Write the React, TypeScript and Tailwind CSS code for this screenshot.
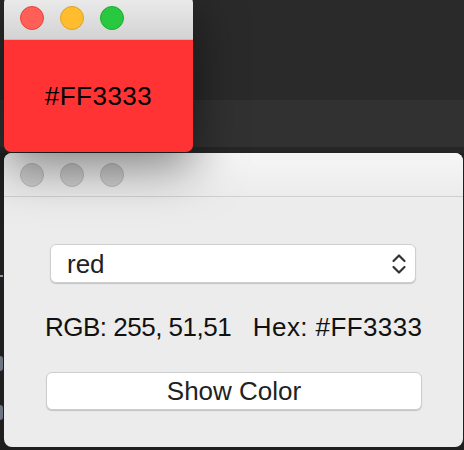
import React, { useState } from "react";

const FONT = { fontFamily: '"Liberation Sans", Arial, sans-serif' };

type Rgb = [number, number, number];

const COLORS: Record<string, Rgb> = {
  red: [255, 51, 51],
};

const toHex = (c: Rgb) =>
  "#" + c.map((n) => n.toString(16).padStart(2, "0").toUpperCase()).join("");

function Lights({ active }: { active: boolean }) {
  const cls = active
    ? [
        "bg-[#ff5f57] border-[#e2463f]",
        "bg-[#febc2e] border-[#dfa123]",
        "bg-[#28c840] border-[#1dac2c]",
      ]
    : ["bg-[#cfcfcf] border-[#bdbdbd]", "bg-[#cfcfcf] border-[#bdbdbd]", "bg-[#cfcfcf] border-[#bdbdbd]"];
  return (
    <div className="flex gap-4 pl-4">
      {cls.map((c, i) => (
        <span key={i} className={`block h-6 w-6 rounded-full border ${c}`} />
      ))}
    </div>
  );
}

export default function App() {
  const [name] = useState("red");
  const rgb = COLORS[name];
  const hex = toHex(rgb);

  return (
    <div className="relative h-[450px] w-[464px] overflow-hidden bg-[#1f1f1f]" style={FONT}>
      {/* desktop behind the windows */}
      <div className="h-[100px] bg-[#2a2a2a]" />
      <div className="h-[47px] bg-[#313131]" />
      <div className="h-[6px] bg-[#262626]" />
      <div className="absolute left-0 top-[275px] h-[2px] w-[3px] bg-[#8a94a6]" />
      <div className="absolute left-0 top-[356px] h-[15px] w-[3px] rounded-r bg-[#6d7482]" />
      <div className="absolute left-0 top-[405px] h-[15px] w-[3px] rounded-r bg-[#6d7482]" />

      {/* main window (inactive) */}
      <div className="absolute left-[4px] top-[153px] flex h-[294px] w-[459px] flex-col overflow-hidden rounded-[8px] bg-[#ececec]">
        <div className="flex h-[44px] shrink-0 items-center border-b border-[#d0d0d0] bg-gradient-to-b from-[#f6f6f6] to-[#ececec]">
          <Lights active={false} />
        </div>
        <div className="flex flex-col pl-[41px] pt-[47px]">
          <div className="ml-[5px] flex h-[39px] w-[366px] items-center justify-between rounded-[6px] border border-[#cfcfcf] bg-white pl-[16px] pr-[8px] shadow-[0_1px_1px_rgba(0,0,0,0.18)]">
            <span className="text-[26px] leading-none text-[#222]">{name}</span>
            <svg width="16" height="24" viewBox="0 0 16 24" fill="none" stroke="#333" strokeWidth="2.2" strokeLinecap="round" strokeLinejoin="round">
              <path d="M2.5 9 8 3.5 13.5 9" />
              <path d="M2.5 15 8 20.5 13.5 15" />
            </svg>
          </div>
          <p className="mt-[29px] whitespace-pre text-[26px] leading-[30px] text-[#111]">
            <span className="tracking-[-0.5px]">{`RGB: ${rgb[0]}, ${rgb[1]},${rgb[2]}`}</span>
            {"   "}
            <span className="tracking-[0.4px]">{`Hex: ${hex}`}</span>
          </p>
          <button className="ml-[1px] mt-[30px] flex h-[38px] w-[376px] items-center justify-center rounded-[6px] border border-[#cdcdcd] bg-white text-[26px] leading-none text-[#222] shadow-[0_1px_1px_rgba(0,0,0,0.18)]">
            Show Color
          </button>
        </div>
      </div>

      {/* color preview window (front) */}
      <div className="absolute left-[4px] top-[-4px] z-10 flex w-[189px] flex-col overflow-hidden rounded-[7px] shadow-[0_14px_50px_rgba(0,0,0,0.5)]">
        <div className="flex h-[44px] shrink-0 items-center border-b border-[#bdbdbd] bg-gradient-to-b from-[#ececec] to-[#d3d3d3]">
          <Lights active />
        </div>
        <div className="flex h-[112px] items-center justify-center text-[26px] tracking-[0.5px] text-black" style={{ backgroundColor: hex }}>
          {hex}
        </div>
      </div>
    </div>
  );
}
